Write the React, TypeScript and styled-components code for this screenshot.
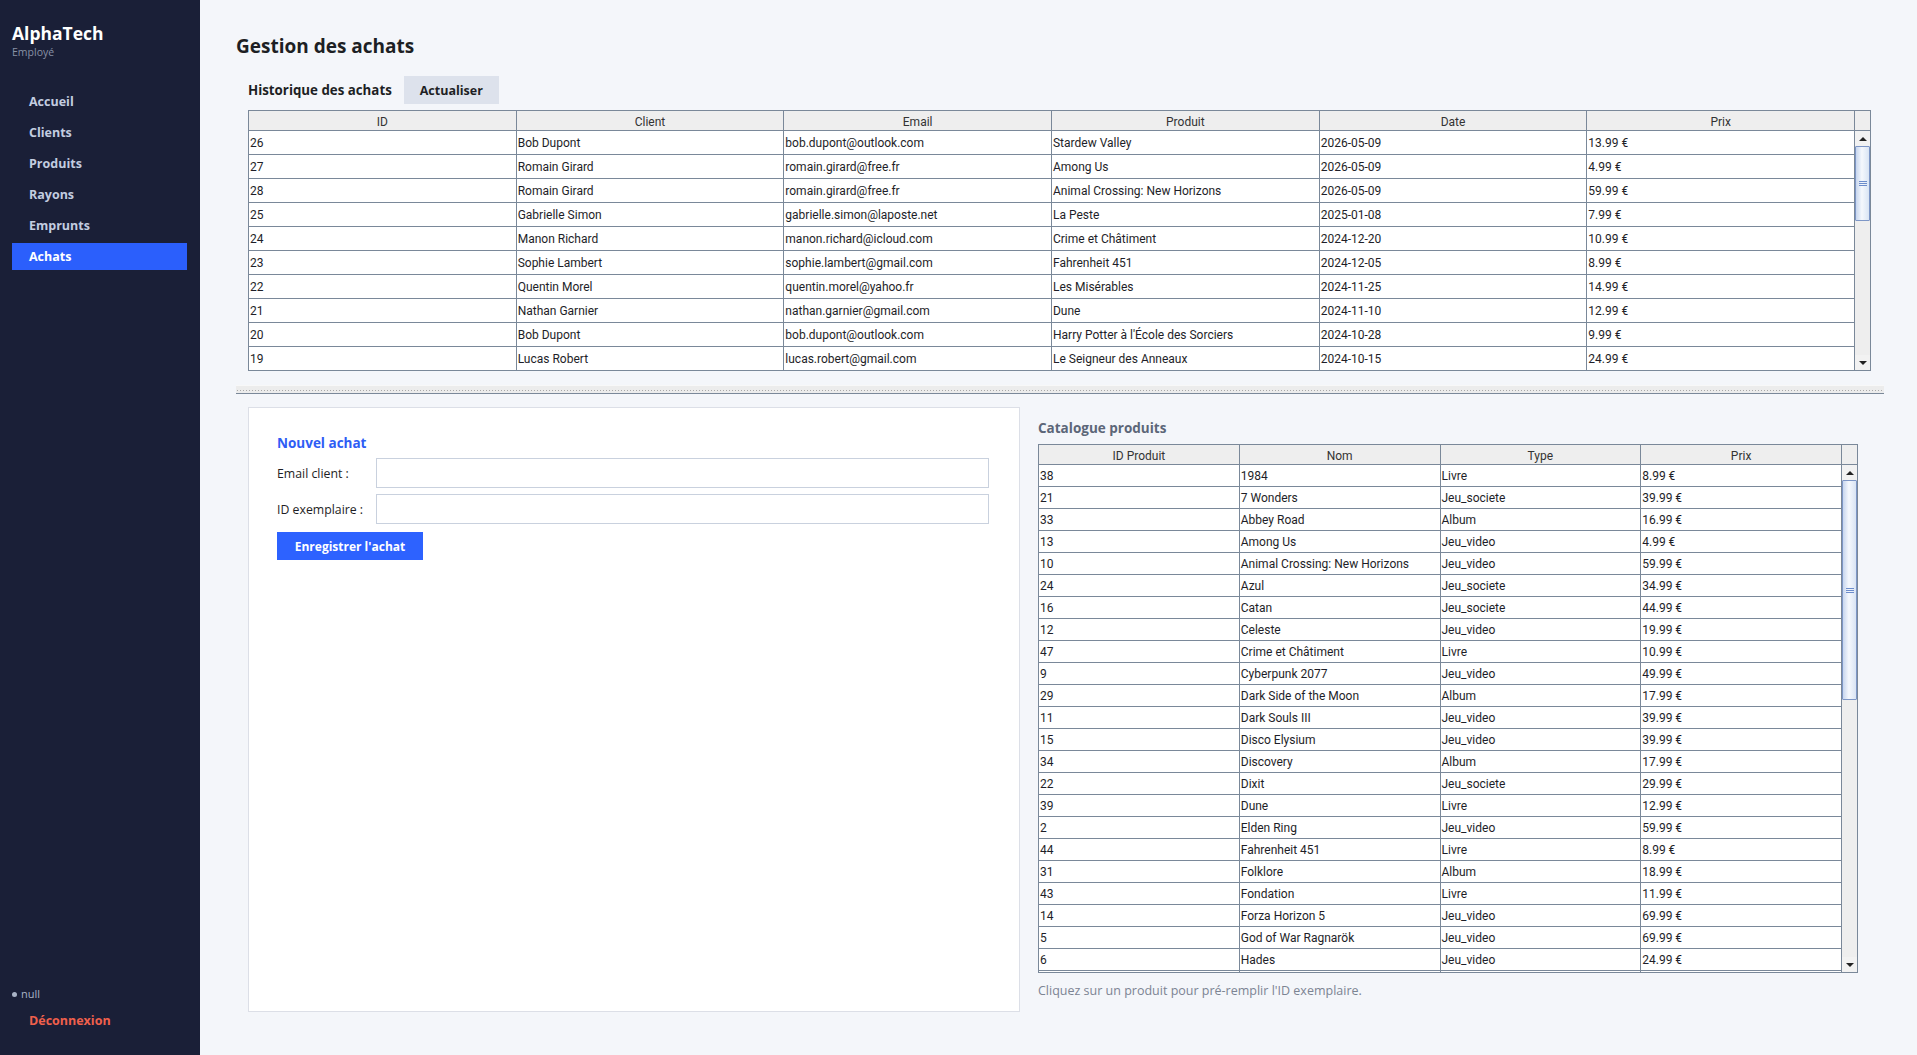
import React from "react";
import styled, { createGlobalStyle } from "styled-components";

const GlobalStyle = createGlobalStyle`
  html, body {
    margin: 0;
    padding: 0;
    background: #f4f6fa;
  }
  * {
    box-sizing: border-box;
  }
`;

const UI = `"Open Sans", "Noto Sans", sans-serif`;
const CELL = `Roboto, "Liberation Sans", sans-serif`;
const GRID = "#7a8899";

const Shell = styled.div`
  display: flex;
  width: 100%;
  height: 100vh;
  font-family: ${UI};
`;

const Sidebar = styled.aside`
  width: 200px;
  flex-shrink: 0;
  background: #1a1f37;
  display: flex;
  flex-direction: column;
  padding: 22px 13px 26px 12px;
`;

const Brand = styled.div`
  color: #ffffff;
  font-size: 17.5px;
  font-weight: 700;
  line-height: 22px;
`;

const Role = styled.div`
  color: #8891a6;
  font-size: 10.5px;
  line-height: 14px;
  margin-top: 1px;
`;

const Nav = styled.nav`
  display: flex;
  flex-direction: column;
  gap: 4px;
  margin-top: 29px;
`;

const NavItem = styled.div<{ $active?: boolean }>`
  height: 27px;
  display: flex;
  align-items: center;
  padding-left: 17px;
  font-size: 12.5px;
  font-weight: 700;
  color: ${({ $active }) => ($active ? "#ffffff" : "#c3cde0")};
  background: ${({ $active }) => ($active ? "#2b5ffc" : "transparent")};
`;

const Spacer = styled.div`
  flex: 1;
`;

const UserLine = styled.div`
  display: flex;
  align-items: center;
  gap: 4px;
  color: #a9b3c6;
  font-size: 11px;
  line-height: 14px;
`;

const Dot = styled.span`
  width: 5px;
  height: 5px;
  border-radius: 50%;
  background: #a9b3c6;
`;

const Logout = styled.div`
  color: #f0604c;
  font-size: 12.5px;
  font-weight: 700;
  line-height: 16px;
  padding-left: 17px;
  margin-top: 12px;
`;

const Main = styled.main`
  flex: 1;
  display: flex;
  flex-direction: column;
  padding: 34px 33px 0 36px;
  min-width: 0;
`;

const Title = styled.h1`
  margin: 0;
  font-size: 19px;
  line-height: 24px;
  font-weight: 700;
  color: #1d1f24;
`;

const HistorySection = styled.section`
  padding: 0 13px 0 12px;
  margin-top: 18px;
`;

const Toolbar = styled.div`
  display: flex;
  align-items: center;
  gap: 12px;
  height: 28px;
  margin-bottom: 6px;
`;

const SectionLabel = styled.div`
  font-size: 13.3px;
  font-weight: 700;
  color: #1d1f24;
`;

const GreyButton = styled.button`
  height: 28px;
  width: 95px;
  border: none;
  background: #dde2ec;
  font-family: ${UI};
  font-size: 12.5px;
  font-weight: 700;
  color: #1d1f24;
  padding: 0;
`;

const Frame = styled.div<{ $head: number }>`
  border: 1px solid ${GRID};
  display: grid;
  grid-template-columns: 1fr 15px;
  grid-template-rows: ${({ $head }) => $head}px 1fr;
  background: #ffffff;
  overflow: hidden;
`;

const HeadRow = styled.div<{ $cols: number }>`
  display: grid;
  grid-template-columns: repeat(${({ $cols }) => $cols}, 1fr);
  background: #eeeeee;
  border-bottom: 1px solid ${GRID};
`;

const HeadCell = styled.div`
  border-right: 1px solid ${GRID};
  display: flex;
  align-items: center;
  justify-content: center;
  padding-top: 2px;
  font-family: ${CELL};
  font-size: 12px;
  color: #333333;
`;

const Corner = styled.div`
  background: #eeeeee;
  border-bottom: 1px solid ${GRID};
`;

const Body = styled.div<{ $height: number }>`
  height: ${({ $height }) => $height}px;
  overflow: hidden;
`;

const Row = styled.div<{ $cols: number; $h: number }>`
  display: grid;
  grid-template-columns: repeat(${({ $cols }) => $cols}, 1fr);
  height: ${({ $h }) => $h}px;
  border-bottom: 1px solid ${GRID};
`;

const Cell = styled.div`
  border-right: 1px solid ${GRID};
  display: flex;
  align-items: center;
  padding-left: 1px;
  font-family: ${CELL};
  font-size: 12px;
  color: #1e1e28;
  white-space: nowrap;
  overflow: hidden;
`;

const ScrollBar = styled.div`
  display: flex;
  flex-direction: column;
  background: #eeeeee;
`;

const Arrow = styled.div<{ $down?: boolean }>`
  height: 15px;
  flex-shrink: 0;
  background: #f2f2f2;
  display: flex;
  align-items: center;
  justify-content: center;
  &::after {
    content: "";
    width: 0;
    height: 0;
    border-left: 4px solid transparent;
    border-right: 4px solid transparent;
    ${({ $down }) =>
      $down ? "border-top: 4px solid #222;" : "border-bottom: 4px solid #222;"}
  }
`;

const Track = styled.div`
  flex: 1;
  display: flex;
  flex-direction: column;
`;

const Thumb = styled.div<{ $size: number }>`
  height: ${({ $size }) => $size}px;
  border: 1px solid #7d96c6;
  border-radius: 1px;
  background: linear-gradient(to right, #c7d6ee, #f5f8fd 45%, #d9e4f4);
  display: flex;
  flex-direction: column;
  align-items: center;
  justify-content: center;
  gap: 1px;
`;

const Grip = styled.span`
  width: 8px;
  height: 1px;
  background: #6c8ccb;
`;

const Splitter = styled.div`
  height: 9px;
  margin-top: 14px;
  background-color: #ececec;
  background-image: radial-gradient(circle, #a8a8a8 0.7px, transparent 0.9px);
  background-size: 3px 3px;
  background-position: 0 3px;
  background-repeat: repeat-x;
  border-top: 1px solid #f8f8f8;
  border-bottom: 1px solid ${GRID};
`;

const Lower = styled.div`
  display: grid;
  grid-template-columns: 772px 820px;
  gap: 18px;
  margin: 13px 0 0 12px;
`;

const Card = styled.div`
  height: 605px;
  background: #ffffff;
  border: 1px solid #dcdfe7;
  padding: 26px 30px 0 28px;
`;

const CardTitle = styled.div`
  font-size: 13.5px;
  line-height: 18px;
  font-weight: 700;
  color: #2e5df5;
`;

const FormRow = styled.div`
  display: grid;
  grid-template-columns: 99px 1fr;
  align-items: center;
  height: 30px;
  margin-top: 6px;
`;

const Label = styled.label`
  font-size: 12.3px;
  color: #1e1e24;
`;

const Input = styled.input`
  height: 30px;
  border: 1px solid #c9d1de;
  background: #ffffff;
  outline: none;
  font-family: ${UI};
  font-size: 12px;
`;

const PrimaryButton = styled.button`
  margin-top: 8px;
  height: 28px;
  width: 146px;
  border: none;
  padding: 0;
  background: #2d62ff;
  color: #ffffff;
  font-family: ${UI};
  font-size: 12px;
  font-weight: 700;
`;

const Catalog = styled.div`
  padding-top: 12px;
  display: flex;
  flex-direction: column;
`;

const CatalogTitle = styled.div`
  font-size: 13.5px;
  line-height: 18px;
  font-weight: 700;
  color: #5c6678;
  margin-bottom: 7px;
`;

const Hint = styled.div`
  margin-top: 10px;
  font-size: 12.5px;
  line-height: 16px;
  color: #7c8493;
`;

type Row = string[];

const purchases: Row[] = [
  ["26", "Bob Dupont", "bob.dupont@outlook.com", "Stardew Valley", "2026-05-09", "13.99 €"],
  ["27", "Romain Girard", "romain.girard@free.fr", "Among Us", "2026-05-09", "4.99 €"],
  ["28", "Romain Girard", "romain.girard@free.fr", "Animal Crossing: New Horizons", "2026-05-09", "59.99 €"],
  ["25", "Gabrielle Simon", "gabrielle.simon@laposte.net", "La Peste", "2025-01-08", "7.99 €"],
  ["24", "Manon Richard", "manon.richard@icloud.com", "Crime et Châtiment", "2024-12-20", "10.99 €"],
  ["23", "Sophie Lambert", "sophie.lambert@gmail.com", "Fahrenheit 451", "2024-12-05", "8.99 €"],
  ["22", "Quentin Morel", "quentin.morel@yahoo.fr", "Les Misérables", "2024-11-25", "14.99 €"],
  ["21", "Nathan Garnier", "nathan.garnier@gmail.com", "Dune", "2024-11-10", "12.99 €"],
  ["20", "Bob Dupont", "bob.dupont@outlook.com", "Harry Potter à l'École des Sorciers", "2024-10-28", "9.99 €"],
  ["19", "Lucas Robert", "lucas.robert@gmail.com", "Le Seigneur des Anneaux", "2024-10-15", "24.99 €"],
];

const products: Row[] = [
  ["38", "1984", "Livre", "8.99 €"],
  ["21", "7 Wonders", "Jeu_societe", "39.99 €"],
  ["33", "Abbey Road", "Album", "16.99 €"],
  ["13", "Among Us", "Jeu_video", "4.99 €"],
  ["10", "Animal Crossing: New Horizons", "Jeu_video", "59.99 €"],
  ["24", "Azul", "Jeu_societe", "34.99 €"],
  ["16", "Catan", "Jeu_societe", "44.99 €"],
  ["12", "Celeste", "Jeu_video", "19.99 €"],
  ["47", "Crime et Châtiment", "Livre", "10.99 €"],
  ["9", "Cyberpunk 2077", "Jeu_video", "49.99 €"],
  ["29", "Dark Side of the Moon", "Album", "17.99 €"],
  ["11", "Dark Souls III", "Jeu_video", "39.99 €"],
  ["15", "Disco Elysium", "Jeu_video", "39.99 €"],
  ["34", "Discovery", "Album", "17.99 €"],
  ["22", "Dixit", "Jeu_societe", "29.99 €"],
  ["39", "Dune", "Livre", "12.99 €"],
  ["2", "Elden Ring", "Jeu_video", "59.99 €"],
  ["44", "Fahrenheit 451", "Livre", "8.99 €"],
  ["31", "Folklore", "Album", "18.99 €"],
  ["43", "Fondation", "Livre", "11.99 €"],
  ["14", "Forza Horizon 5", "Jeu_video", "69.99 €"],
  ["5", "God of War Ragnarök", "Jeu_video", "69.99 €"],
  ["6", "Hades", "Jeu_video", "24.99 €"],
  ["", "", "", ""],
];

type GridProps = {
  columns: string[];
  rows: Row[];
  rowHeight: number;
  bodyHeight: number;
  thumb: number;
};

const DataGrid: React.FC<GridProps> = ({ columns, rows, rowHeight, bodyHeight, thumb }) => (
  <Frame $head={20}>
    <HeadRow $cols={columns.length}>
      {columns.map((c) => (
        <HeadCell key={c}>{c}</HeadCell>
      ))}
    </HeadRow>
    <Corner />
    <Body $height={bodyHeight}>
      {rows.map((r, i) => (
        <Row key={i} $cols={columns.length} $h={rowHeight}>
          {r.map((v, j) => (
            <Cell key={j}>{v}</Cell>
          ))}
        </Row>
      ))}
    </Body>
    <ScrollBar>
      <Arrow />
      <Track>
        <Thumb $size={thumb}>
          <Grip />
          <Grip />
          <Grip />
        </Thumb>
      </Track>
      <Arrow $down />
    </ScrollBar>
  </Frame>
);

const navItems = ["Accueil", "Clients", "Produits", "Rayons", "Emprunts", "Achats"];

export default function App() {
  return (
    <Shell>
      <GlobalStyle />
      <Sidebar>
        <Brand>AlphaTech</Brand>
        <Role>Employé</Role>
        <Nav>
          {navItems.map((n) => (
            <NavItem key={n} $active={n === "Achats"}>
              {n}
            </NavItem>
          ))}
        </Nav>
        <Spacer />
        <UserLine>
          <Dot />
          null
        </UserLine>
        <Logout>Déconnexion</Logout>
      </Sidebar>
      <Main>
        <Title>Gestion des achats</Title>
        <HistorySection>
          <Toolbar>
            <SectionLabel>Historique des achats</SectionLabel>
            <GreyButton>Actualiser</GreyButton>
          </Toolbar>
          <DataGrid
            columns={["ID", "Client", "Email", "Produit", "Date", "Prix"]}
            rows={purchases}
            rowHeight={24}
            bodyHeight={239}
            thumb={75}
          />
        </HistorySection>
        <Splitter />
        <Lower>
          <Card>
            <CardTitle>Nouvel achat</CardTitle>
            <FormRow>
              <Label>Email client :</Label>
              <Input />
            </FormRow>
            <FormRow>
              <Label>ID exemplaire :</Label>
              <Input />
            </FormRow>
            <PrimaryButton>Enregistrer l'achat</PrimaryButton>
          </Card>
          <Catalog>
            <CatalogTitle>Catalogue produits</CatalogTitle>
            <DataGrid
              columns={["ID Produit", "Nom", "Type", "Prix"]}
              rows={products}
              rowHeight={22}
              bodyHeight={507}
              thumb={220}
            />
            <Hint>Cliquez sur un produit pour pré-remplir l'ID exemplaire.</Hint>
          </Catalog>
        </Lower>
      </Main>
    </Shell>
  );
}
